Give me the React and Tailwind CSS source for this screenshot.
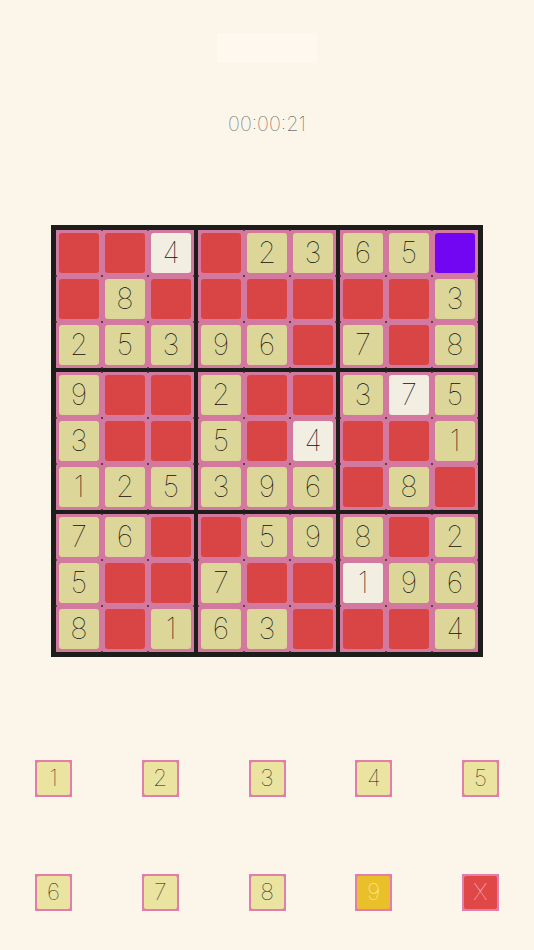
import React from "react";

const ROWS = [
  ["r", "r", "4w", "r", "2", "3", "6", "5", "p"],
  ["r", "8", "r", "r", "r", "r", "r", "r", "3"],
  ["2", "5", "3", "9", "6", "r", "7", "r", "8"],
  ["9", "r", "r", "2", "r", "r", "3", "7w", "5"],
  ["3", "r", "r", "5", "r", "4w", "r", "r", "1"],
  ["1", "2", "5", "3", "9", "6", "r", "8", "r"],
  ["7", "6", "r", "r", "5", "9", "8", "r", "2"],
  ["5", "r", "r", "7", "r", "r", "1w", "9", "6"],
  ["8", "r", "1", "6", "3", "r", "r", "r", "4"],
];

const DOTS = [0, 46, 92, 138];

function Cell({ v }) {
  if (v === "r") return <div className="w-[40px] h-[40px] rounded-[3px] bg-[#d94444]" />;
  if (v === "p") return <div className="w-[40px] h-[40px] rounded-[3px] bg-[#7206f2]" />;
  const white = v.endsWith("w");
  return (
    <div
      className={
        "w-[40px] h-[40px] rounded-[3px] flex items-center justify-center text-[29px] font-thin text-[#0e0e0c] " +
        (white ? "bg-[#f2eee2]" : "bg-[#ddd699]")
      }
    >
      {v[0]}
    </div>
  );
}

function Box({ br, bc }) {
  const cells = [];
  for (let r = 0; r < 3; r++)
    for (let c = 0; c < 3; c++) cells.push(ROWS[br * 3 + r][bc * 3 + c]);
  return (
    <div className="relative w-[138px] h-[138px] bg-[#d3789f] p-[3px] grid grid-cols-3 gap-[6px]">
      {cells.map((v, i) => (
        <Cell key={i} v={v} />
      ))}
      {DOTS.map((y) =>
        DOTS.map((x) =>
          (x === 0 || x === 138) && (y === 0 || y === 138) ? null : (
            <span
              key={x + "-" + y}
              className="absolute w-[2px] h-[2px] rounded-full bg-[#3a2a30]"
              style={{ left: x - 1, top: y - 1 }}
            />
          )
        )
      )}
    </div>
  );
}

function Key({ label, kind }) {
  const fill =
    kind === "sel"
      ? "bg-[#eac02a] text-[#fbf1cc]"
      : kind === "x"
      ? "bg-[#e04747] text-[#f8c0ca]"
      : "bg-[#ebe3a0] text-[#151512]";
  return (
    <div className="w-[37px] h-[37px] bg-[#e07fab] p-[2px]">
      <div className={"w-full h-full rounded-[2px] flex items-center justify-center text-[23px] font-thin " + fill}>
        {label}
      </div>
    </div>
  );
}

export default function App() {
  return (
    <div
      className="w-[534px] h-[950px] bg-[#fcf5e9] flex flex-col items-center overflow-hidden"
      style={{ fontFamily: "Inter, 'Liberation Sans', sans-serif" }}
    >
      <div className="mt-[33px] w-[100px] h-[30px] bg-[#fef8ee]" />
      <div className="mt-[49px] h-[24px] leading-[24px] text-[20px] font-thin text-[#3a3936]">00:00:21</div>

      <div className="mt-[89px] w-[432px] h-[432px] bg-[#1d1d1b] p-[5px] grid grid-cols-3 gap-[4px]">
        {[0, 1, 2].map((br) =>
          [0, 1, 2].map((bc) => <Box key={br + "" + bc} br={br} bc={bc} />)
        )}
      </div>

      <div className="mt-[103px] w-full px-[35px] flex justify-between">
        {["1", "2", "3", "4", "5"].map((n) => (
          <Key key={n} label={n} />
        ))}
      </div>
      <div className="mt-[77px] w-full px-[35px] flex justify-between">
        <Key label="6" />
        <Key label="7" />
        <Key label="8" />
        <Key label="9" kind="sel" />
        <Key label="X" kind="x" />
      </div>
    </div>
  );
}
